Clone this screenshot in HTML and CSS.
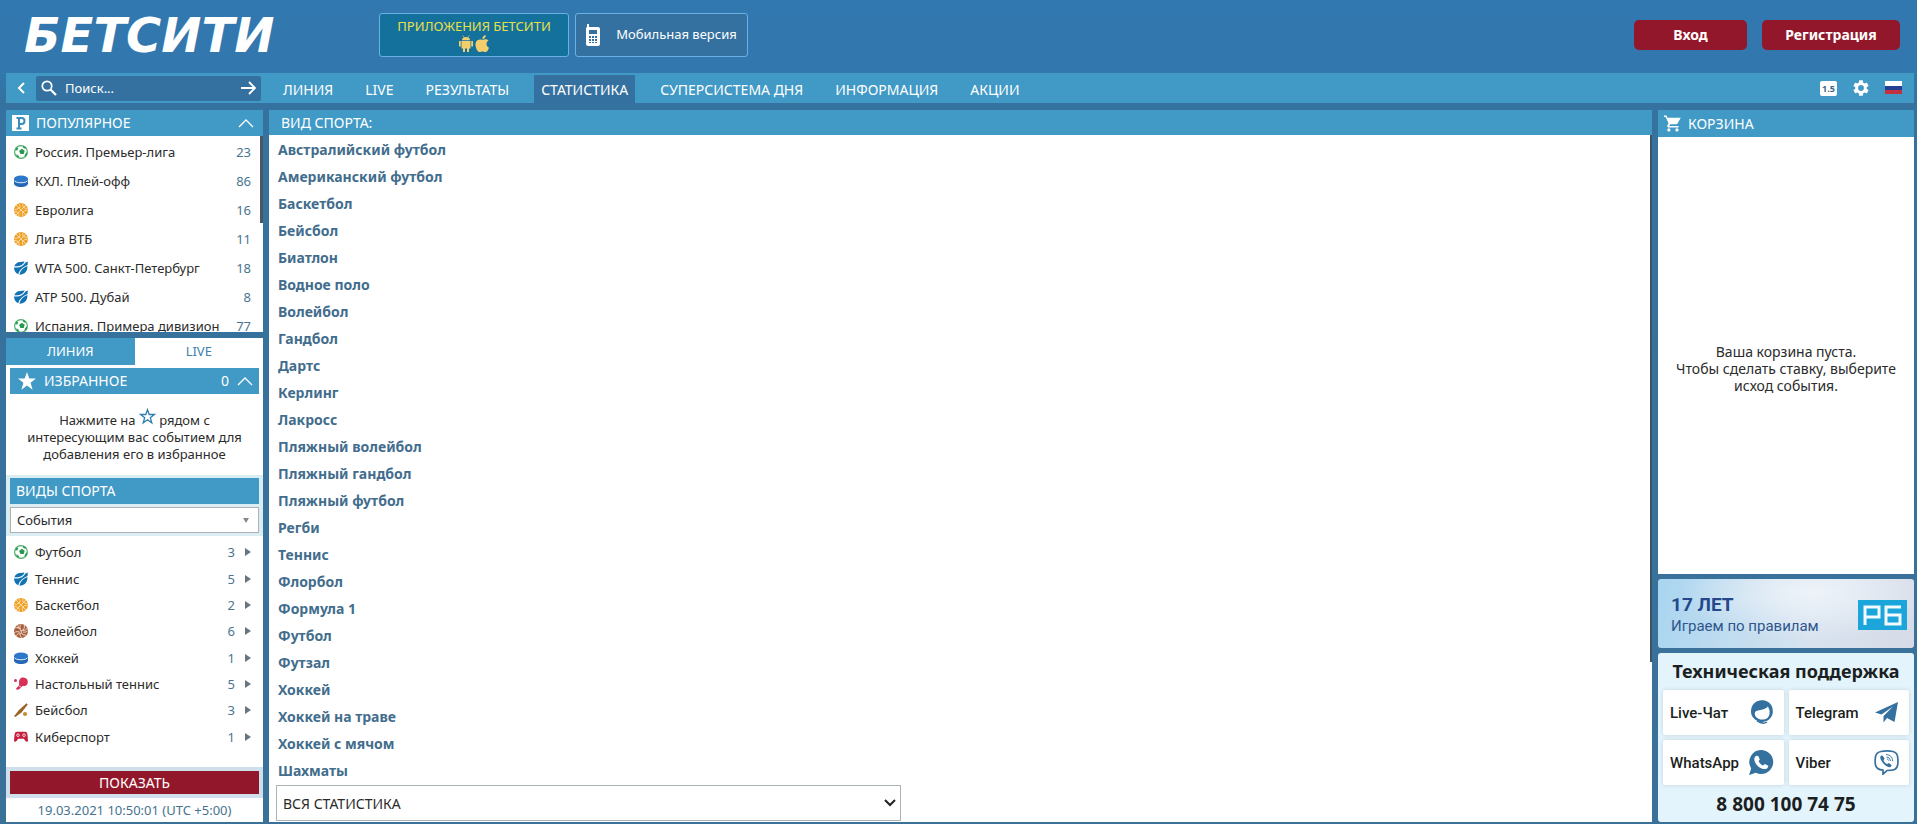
FILE: index.html
```html
<!DOCTYPE html>
<html lang="ru">
<head>
<meta charset="utf-8">
<meta name="viewport" content="width=device-width, initial-scale=1">
<title>БЕТСИТИ</title>
<link rel="stylesheet" href="styles.css">
</head>
<body>
<svg class="defs" aria-hidden="true">
  <symbol id="football" viewBox="0 0 14 14"><circle cx="7" cy="7" r="6.400" fill="#fff" stroke="#4cb06e" stroke-width="1.200"/><path d="M7.800 3.800l2.900 1.900-.9 3.400H6.400L5.100 6z" fill="#259a4e"/><path d="M1 5.200l1.700-2.600 1.600.6L3.200 5.600zM9 .8l3 1.700-.6 1.200-2.200-.8zM12 8l1.300-.8-.5 2.600-1.800 2-.5-1.400zM2 9.500l2 .6 1.600 2.600-2.300-.8z" fill="#259a4e"/></symbol>
  <symbol id="puck" viewBox="0 0 14 14"><path d="M0 5v4.500C0 11.400 3 13 7 13s7-1.600 7-3.500V5z" fill="#2367b5"/><ellipse cx="7" cy="4.800" rx="7" ry="3.300" fill="#2c78cb"/><path d="M0 6.300c1.500 3.300 12.500 3.300 14 0" fill="none" stroke="#fff" stroke-width=".9"/></symbol>
  <symbol id="basketball" viewBox="0 0 14 14"><circle cx="7" cy="7" r="7" fill="#efa126"/><path d="M2 2l10 10M12 2L2 12M4.800.600c2.200 2.600 2 5-4 6M13.500 7.200c-4.500.200-6 2.500-4.500 6.200M.500 8.500c4 .200 5 2 4.500 5M9 .500C8 4 10 5.500 13.500 5.300" fill="none" stroke="#fff" stroke-width=".6"/></symbol>
  <symbol id="tennis" viewBox="0 0 14 14"><path d="M.300 5.200C1.200 2.500 3.500.900 6 .900l4.500-.4C9.500 3.600 5.500 6 .300 5.200z" fill="#1273b4"/><path d="M0 6.400c5 1 9.600-1.600 11.400-5l2.400-.9-.2 3.400C9.500 5.500 5.500 8.500 4.300 13.200 1.800 12.200 0 9.500 0 6.400z" fill="#1273b4"/><path d="M13.400 5.100c.3 5-2.600 8.700-8 8.700.7-4 3.500-7 8-8.700z" fill="#1273b4"/></symbol>
  <symbol id="volleyball" viewBox="0 0 14 14"><circle cx="7" cy="7" r="7" fill="#a85d38"/><path d="M7 7C6 4 3.500 3 1 4M7 7c3-1 4-3.500 3.200-6M7 7c0 3 2 4.500 5 4M7 .500C5.600 2 5.700 3.500 6.300 5M4 1.300C4 3 4.500 4 5 4.500M8.800 8c2 .500 3.500 0 4.700-1M9 6.300c2 .400 3.600-.6 4-2M5.700 8.200C3.500 7.500 2 7.500.500 8.500M5.500 9.500c-1.400 0-2.500 1-3 2.200M6.300 9c-.6 1.700 0 3.300 1.200 4.700" fill="none" stroke="#fff" stroke-width=".8"/></symbol>
  <symbol id="pingpong" viewBox="0 0 14 14"><circle cx="1.500" cy="3.500" r="1.500" fill="#d7315a"/><path d="M6 2c2-2.500 6.500-1.500 7.500 1.300 1 2.700-.5 5.500-2.500 5.700-1.500.200-2.500-.5-3.500 1L5.500 12 3 13l-1-1.500L4.500 9C6 7.500 4 4.500 6 2z" fill="#d7315a"/><path d="M4.800 8.700l2.600 1.700" stroke="#fff" stroke-width=".7"/></symbol>
  <symbol id="baseball" viewBox="0 0 14 14"><path d="M12.500.300l1.300 1.200-6.300 8L2 13.500l-1 .5-.8-.8.600-1L5 7z" fill="#9a6224"/><circle cx="11" cy="11" r="2.100" fill="#c68a33"/></symbol>
  <symbol id="gamepad" viewBox="0 0 14 14"><path d="M3 1.800h8c1.500 0 2 .8 2.400 2.500l.6 6c0 1.800-1.800 2-2.500.8L9.800 8.800H4.200l-1.700 2.300C1.800 12.300 0 12.100 0 10.300l.6-6C1 2.600 1.500 1.800 3 1.800z" fill="#c4213f"/><circle cx="4" cy="5.200" r="1.300" fill="none" stroke="#fff" stroke-width=".8"/><circle cx="10" cy="5.200" r="1.300" fill="none" stroke="#fff" stroke-width=".8"/></symbol>
  <symbol id="chevron-up" viewBox="0 0 16 10"><path d="M1 9l7-7 7 7" fill="none" stroke="currentColor" stroke-width="1.300"/></symbol>
</svg>

<header class="top">
  <a class="logo" href="#">БЕТСИТИ</a>
  <div class="top-links">
    <a class="apps" href="#"><span>ПРИЛОЖЕНИЯ БЕТСИТИ</span>
      <svg width="32" height="18" viewBox="0 0 32 18" aria-hidden="true"><g fill="#f2cf6c"><path d="M3.500 6h9v7.500h-9zM4 5.200C4 3 5.800 2 8 2s4 1 4 3.200zM1 6h1.800v5.500H1zM13.200 6H15v5.500h-1.800zM5 13h2v4H5zM9 13h2v4H9z"/><path d="M4.800.500l1.500 2M11.200.500l-1.500 2" stroke="#f2cf6c" stroke-width=".7"/><path d="M28.500 9c0-1.800 1-2.800 2-3.400C29 3.800 26.500 4 24.500 5c-2.500-1-5-.5-6.500 2-1.500 3 .5 8 2.500 9.700 1.500 1 2.500-.2 4-.2s2.500 1.200 4 .2c1.200-1 2-2.500 2.500-4C29.500 12 28.500 10.800 28.500 9zM24.300 4.200C24.200 2 26 .2 27.800 0c.2 2-1.300 4.200-3.500 4.200z"/></g></svg>
    </a>
    <a class="mobile" href="#">
      <svg width="14" height="22" viewBox="0 0 14 22" aria-hidden="true"><path d="M1 0h2v3h9a2 2 0 012 2v15a2 2 0 01-2 2H2a2 2 0 01-2-2V4l1-1z" fill="#fff"/><path d="M3 6h8v4H3zM3 12h2v2H3zM6 12h2v2H6zM9 12h2v2H9zM3 15h2v2H3zM6 15h2v2H6zM9 15h2v2H9zM3 18h2v1H3zM6 18h2v1H6zM9 18h2v1H9z" fill="#35709e"/></svg>
      <span>Мобильная версия</span>
    </a>
  </div>
  <div class="auth">
    <button class="btn login" type="button">Вход</button>
    <button class="btn register" type="button">Регистрация</button>
  </div>
</header>

<div class="navbar">
  <button class="icon-btn back" type="button" aria-label="Назад"><svg width="8" height="12" viewBox="0 0 8 12"><path d="M7 1L2 6l5 5" fill="none" stroke="#fff" stroke-width="2"/></svg></button>
  <form class="search">
    <svg width="16" height="16" viewBox="0 0 16 16" aria-hidden="true"><circle cx="6" cy="6" r="4.700" fill="none" stroke="#fff" stroke-width="1.700"/><path d="M9.500 9.500l5.500 5.500" stroke="#fff" stroke-width="2.200"/></svg>
    <input type="text" aria-label="Поиск" placeholder="Поиск...">
    <button class="icon-btn" type="button" aria-label="Найти"><svg width="16" height="14" viewBox="0 0 16 14"><path d="M0 7h14M8 1l6 6-6 6" fill="none" stroke="#fff" stroke-width="1.800"/></svg></button>
  </form>
  <nav class="menu">
    <a href="#">ЛИНИЯ</a><a href="#">LIVE</a><a href="#">РЕЗУЛЬТАТЫ</a><a class="active" href="#">СТАТИСТИКА</a><a href="#">СУПЕРСИСТЕМА ДНЯ</a><a href="#">ИНФОРМАЦИЯ</a><a href="#">АКЦИИ</a>
  </nav>
  <div class="tools">
    <button class="odds" type="button" aria-label="Формат коэффициентов 1.5">1.5</button>
    <button class="icon-btn" type="button" aria-label="Настройки"><svg width="16" height="16" viewBox="2 2 20 20"><path fill="#fff" d="M19.140 12.940a7 7 0 000-1.880l2.030-1.580a.5.5 0 00.120-.610l-1.920-3.320a.5.5 0 00-.590-.220l-2.390.960a7 7 0 00-1.620-.940l-.360-2.540A.5.500 0 0013.920 2.400h-3.840a.5.500 0 00-.480.410l-.360 2.540a7 7 0 00-1.620.940l-2.390-.960a.5.500 0 00-.590.220L2.720 8.870a.5.500 0 00.120.610l2.030 1.580a7 7 0 000 1.880l-2.030 1.580a.5.500 0 00-.120.610l1.920 3.320c.120.220.370.290.590.220l2.390-.960c.5.380 1.030.700 1.620.940l.360 2.540c.050.240.240.410.480.410h3.840c.240 0 .440-.170.470-.410l.360-2.540a7 7 0 001.620-.940l2.390.960c.220.080.470 0 .590-.220l1.920-3.320a.5.500 0 00-.120-.610zM12 15.600a3.600 3.600 0 110-7.200 3.600 3.600 0 010 7.200z"/></svg></button>
    <button class="icon-btn" type="button" aria-label="Русский"><svg width="17" height="14" viewBox="0 0 17 14"><path fill="#fff" d="M0 0h17v5H0z"/><path fill="#263f92" d="M0 5h17v4H0z"/><path fill="#c5303f" d="M0 9h17v4H0z"/></svg></button>
  </div>
</div>

<div class="columns">
  <aside class="left">
    <section class="popular">
      <h2 class="bar"><svg width="17" height="16" viewBox="0 0 17 16" aria-hidden="true"><path fill="#fff" d="M0 0h17v16H0z"/><path d="M7 14V3h2.500a3 3 0 010 6H7M4.500 3H7M4.500 13.500h5" fill="none" stroke="#3b8dba" stroke-width="2"/></svg><span>ПОПУЛЯРНОЕ</span><svg class="end" width="16" height="10"><use href="#chevron-up"/></svg></h2>
      <ul class="rows popular-rows">
        <li><svg><use href="#football"/></svg><a href="#">Россия. Премьер-лига</a><b>23</b></li>
        <li><svg><use href="#puck"/></svg><a href="#">КХЛ. Плей-офф</a><b>86</b></li>
        <li><svg><use href="#basketball"/></svg><a href="#">Евролига</a><b>16</b></li>
        <li><svg><use href="#basketball"/></svg><a href="#">Лига ВТБ</a><b>11</b></li>
        <li><svg><use href="#tennis"/></svg><a href="#">WTA 500. Санкт-Петербург</a><b>18</b></li>
        <li><svg><use href="#tennis"/></svg><a href="#">ATP 500. Дубай</a><b>8</b></li>
        <li><svg><use href="#football"/></svg><a href="#">Испания. Примера дивизион</a><b>77</b></li>
      </ul>
    </section>
    <section class="line">
      <div class="tabs"><button class="on" type="button">ЛИНИЯ</button><button type="button">LIVE</button></div>
      <h2 class="bar inset favs"><svg width="18" height="18" viewBox="0 0 18 18" aria-hidden="true"><path fill="#fff" d="M9 0l2.300 6.600H18l-5.400 4.200 2 7L9 13.600l-5.600 4.200 2-7L0 6.600h6.700z"/></svg><span>ИЗБРАННОЕ</span><span class="end">0</span><svg width="16" height="10"><use href="#chevron-up"/></svg></h2>
      <p class="hint">Нажмите на <svg width="17" height="17" viewBox="0 0 17 17"><path d="M8.500 1.700l1.700 4.800h5.100l-4 3.200 1.500 5.200-4.300-3.100-4.300 3.100 1.500-5.200-4-3.200h5.100z" fill="#fff" stroke="#2f7fae" stroke-width="1.300"/></svg> рядом с интересующим вас событием для добавления его в избранное</p>
      <div class="filter">
        <h2 class="bar kinds">ВИДЫ СПОРТА</h2>
        <div class="select small"><select aria-label="Сортировка"><option>События</option></select><svg width="6" height="5" viewBox="0 0 6 5"><path d="M0 0h6L3 5z" fill="#888"/></svg></div>
      </div>
      <ul class="rows sport-rows">
        <li><svg><use href="#football"/></svg><a href="#">Футбол</a><b>3</b><i></i></li>
        <li><svg><use href="#tennis"/></svg><a href="#">Теннис</a><b>5</b><i></i></li>
        <li><svg><use href="#basketball"/></svg><a href="#">Баскетбол</a><b>2</b><i></i></li>
        <li><svg><use href="#volleyball"/></svg><a href="#">Волейбол</a><b>6</b><i></i></li>
        <li><svg><use href="#puck"/></svg><a href="#">Хоккей</a><b>1</b><i></i></li>
        <li><svg><use href="#pingpong"/></svg><a href="#">Настольный теннис</a><b>5</b><i></i></li>
        <li><svg><use href="#baseball"/></svg><a href="#">Бейсбол</a><b>3</b><i></i></li>
        <li><svg><use href="#gamepad"/></svg><a href="#">Киберспорт</a><b>1</b><i></i></li>
      </ul>
      <div class="show"><button type="button">ПОКАЗАТЬ</button></div>
      <time class="clock" datetime="2021-03-19T10:50:01+05:00">19.03.2021 10:50:01 (UTC +5:00)</time>
    </section>
  </aside>

  <main class="stats">
    <h1 class="bar">ВИД СПОРТА:</h1>
    <ul class="sports">
      <li><a href="#">Австралийский футбол</a></li>
      <li><a href="#">Американский футбол</a></li>
      <li><a href="#">Баскетбол</a></li>
      <li><a href="#">Бейсбол</a></li>
      <li><a href="#">Биатлон</a></li>
      <li><a href="#">Водное поло</a></li>
      <li><a href="#">Волейбол</a></li>
      <li><a href="#">Гандбол</a></li>
      <li><a href="#">Дартс</a></li>
      <li><a href="#">Керлинг</a></li>
      <li><a href="#">Лакросс</a></li>
      <li><a href="#">Пляжный волейбол</a></li>
      <li><a href="#">Пляжный гандбол</a></li>
      <li><a href="#">Пляжный футбол</a></li>
      <li><a href="#">Регби</a></li>
      <li><a href="#">Теннис</a></li>
      <li><a href="#">Флорбол</a></li>
      <li><a href="#">Формула 1</a></li>
      <li><a href="#">Футбол</a></li>
      <li><a href="#">Футзал</a></li>
      <li><a href="#">Хоккей</a></li>
      <li><a href="#">Хоккей на траве</a></li>
      <li><a href="#">Хоккей с мячом</a></li>
      <li><a href="#">Шахматы</a></li>
    </ul>
    <div class="select large"><select aria-label="Статистика"><option>ВСЯ СТАТИСТИКА</option></select><svg width="12" height="8" viewBox="0 0 12 8"><path d="M1 1l5 5 5-5" fill="none" stroke="#222" stroke-width="2"/></svg></div>
  </main>

  <aside class="right">
    <section class="basket">
      <h2 class="bar"><svg width="17" height="17" viewBox="1 2 21 20" aria-hidden="true"><path fill="#fff" d="M7 18a2 2 0 100 4 2 2 0 000-4zM1 2v2h2l3.600 7.590-1.350 2.450C4.520 15.370 5.480 17 7 17h12v-2H7.420l1.130-2h7.450c.75 0 1.410-.41 1.750-1.030L21.700 5H5.210L4.270 2zM17 18a2 2 0 100 4 2 2 0 000-4z"/></svg><span>КОРЗИНА</span></h2>
      <p>Ваша корзина пуста.<br>Чтобы сделать ставку, выберите исход события.</p>
    </section>
    <a class="banner" href="#">
      <span class="banner-text"><strong>17 ЛЕТ</strong><span>Играем по правилам</span></span>
      <svg width="49" height="30" viewBox="0 0 49 30" role="img" aria-label="РБ"><path fill="#1ba5da" d="M0 0h49v30H0z"/><path d="M7 25V7h14v10H7M43 7H28v17h14v-9H28" fill="none" stroke="#f3fbff" stroke-width="3"/></svg>
    </a>
    <section class="support">
      <h2>Техническая поддержка</h2>
      <div class="cards">
        <a href="#"><span>Live-Чат</span><svg width="24" height="25" viewBox="0 0 24 25"><path d="M10 .500c5-1 10 1.500 12 6 1.500 5 1 9-2 12-1 1-2 2-3.500 2.500l-3 .7c-.8 1.300-3.500 1.300-4 0C5 20 1 17 1 11.500 1 6 4 1.500 10 .500zM18 6.500c-2 2.500-6 3.500-11 4.200-2 .5-3 3-1.500 5.500 2 3 6 4 9.500 3 4-1 5-5 4.500-9z" fill="#35719f" fill-rule="evenodd"/><path d="M7 21c3 2 7 3 10 1" fill="none" stroke="#35719f" stroke-width="1.500"/></svg></a>
        <a href="#"><span>Telegram</span><svg width="24" height="21" viewBox="0 0 24 21"><path d="M0 10.500L23 0l-3.500 20-7.500-4-3.500 4.500V14L18 4.500 6.500 12.500z" fill="#35719f"/></svg></a>
        <a href="#"><span>WhatsApp</span><svg width="25" height="25" viewBox="0 0 25 25"><path d="M12.700 0a12 12 0 11-5.900 22.700L0 25l2.200-6.600A12 12 0 0112.700 0z" fill="#35719f"/><path d="M7.500 5.800L9.300 6l1.500 3.600-1.200 1.700c1 2 2.400 3.400 4.500 4.200l1.700-1.500 3.500 1.700c0 2-1.600 3.400-3.500 3.400-5.500 0-10.500-5.600-10.500-10 0-1.400.8-2.800 2.200-3.300z" fill="#fff"/></svg></a>
        <a href="#"><span>Viber</span><svg width="25" height="25" viewBox="0 0 25 25"><path d="M7 1.500c4-.7 8-.7 12 0 3 .8 4.500 3 4.700 6 .4 3 .3 6-.2 8-.7 3-2.800 4.400-5.500 4.700l-5 .3L9 24.200v-4C5 19.700 2 18 1.500 15c-.5-3-.4-6 0-8.500C2.200 3.500 4 2 7 1.500z" fill="none" stroke="#35719f" stroke-width="1.700"/><path d="M7.500 5.500l1.300.2 1.700 3-1 1.600c.8 2 1.900 3 3.700 3.800l1.500-1 2.800 2c0 1.700-1 2.400-2.300 2.200-4.500-1.500-8-5.500-9-9.500 0-1 .3-1.900 1.300-2.300z" fill="#35719f"/><path d="M12 4.500c4 .2 6.500 2.500 6.700 6.700M12.500 7c2.300.2 3.700 1.500 3.900 4M13 9c.8.100 1.300.5 1.500 1.500" fill="none" stroke="#35719f"/></svg></a>
      </div>
      <a class="phone" href="tel:88001007475">8 800 100 74 75</a>
    </section>
  </aside>
</div>
</body>
</html>
```
FILE: styles.css
```css
* { box-sizing: border-box; }
body {
  margin: 0;
  min-height: 100vh;
  display: flex;
  flex-direction: column;
  padding: 0 3px 2px 6px;
  background: linear-gradient(#3278b0 0, #3278ae 72px, #35729f 104px, #3a7199 100%);
  color: #2b2b2b;
  font: 14px/17px "Noto Sans", "Open Sans", sans-serif;
}
ul, h1, h2, p { margin: 0; padding: 0; font-weight: 400; list-style: none; }
a { color: inherit; text-decoration: none; }
button, input, select { font: inherit; color: inherit; border: 0; padding: 0; margin: 0; }
button { cursor: pointer; }
svg { flex: none; display: block; }
.defs { position: absolute; width: 0; height: 0; }

/* Header */
.top { display: flex; height: 73px; align-items: center; padding: 0 14px 4px 18px; }
.logo { width: 355px; color: #fff; font: italic 700 48px/50px "DejaVu Sans", sans-serif; }
.top-links { display: flex; gap: 6px; }
.apps, .mobile { height: 44px; border: 1px solid #69b3e4; border-radius: 3px; color: #fff; font-size: 13px; }
.apps { width: 190px; display: flex; flex-direction: column; align-items: center; padding-top: 4px; background: #14719c; color: #e8e04a; }
.apps span { white-space: nowrap; }
.mobile { width: 173px; display: flex; align-items: center; justify-content: center; gap: 16px; background: #3571a0; }
.auth { display: flex; gap: 15px; margin-left: auto; }
.btn { height: 30px; border-radius: 5px; background: #93172b; color: #fff; font-weight: 700; }
.login { width: 113px; }
.register { width: 138px; }

/* Navigation */
.navbar { display: flex; height: 30px; align-items: center; background: #4199c6; color: #fff; }
.icon-btn { display: flex; background: none; }
.back { width: 30px; justify-content: center; }
.search { display: flex; align-items: center; gap: 8px; width: 225px; height: 25px; padding: 0 4px 0 5px; background: #3571a0; border-radius: 2px; }
.search input { flex: 1; min-width: 0; background: none; font-size: 13px; }
.search input::placeholder { color: #fff; opacity: 1; }
.menu { display: flex; align-self: flex-end; gap: 18px; margin-left: 15px; }
.menu a { height: 28px; padding: 0 7px; line-height: 29px; white-space: nowrap; }
.menu .active { background: #3571a0; }
.tools { display: flex; align-items: center; gap: 16px; margin-left: auto; padding-right: 12px; }
.odds { width: 17px; height: 15px; border-radius: 2px; background: #fff; color: #3b6785; font: 700 9px/15px "Noto Sans", sans-serif; }

/* Panels */
.columns { flex: 1; display: grid; grid-template-columns: 257px minmax(0, 1fr) 256px; gap: 6px; padding-top: 7px; }
.bar { display: flex; align-items: center; gap: 7px; height: 26px; padding: 0 6px; background: #4199c6; color: #fff; font-size: 14px; line-height: 20px; }
.bar .end { margin-left: auto; }
.left { display: flex; flex-direction: column; gap: 6px; }
.popular { position: relative; background: #fff; }
.popular::after { content: ""; position: absolute; top: 26px; right: 0; width: 3px; height: 87px; background: #4b5862; }
.popular .end { margin-right: 3px; }
.popular-rows { max-height: 196px; overflow: hidden; padding-top: 1px; }
.rows li { display: flex; align-items: center; padding: 0 12px 0 8px; font-size: 13px; line-height: 20px; }
.popular-rows li { height: 29px; }
.rows svg { width: 14px; height: 14px; margin-right: 7px; }
.rows a { white-space: nowrap; }
.rows b { margin-left: auto; color: #4a7590; font-weight: 400; }
.rows i { margin-left: 10px; border: solid transparent; border-width: 4px 0 4px 6px; border-left-color: #67757f; }
.line { flex: 1; display: flex; flex-direction: column; background: #fff; }
.tabs { display: grid; grid-template-columns: 1fr 1fr; height: 27px; }
.tabs button { background: #fff; color: #3d83ad; font-size: 13px; }
.tabs .on { background: #4199c6; color: #fff; }
.inset { margin: 3px 4px 0; }
.favs { padding-left: 8px; gap: 8px; }
.hint { padding: 14px 10px 12px; text-align: center; font-size: 13px; line-height: 17px; }
.hint svg { display: inline-block; vertical-align: 0; }
.filter { padding: 3px 4px; background: #d9edf3; }
.kinds { margin-bottom: 3px; }
.select { display: grid; align-items: center; }
.select > * { grid-area: 1 / 1; }
.select svg { justify-self: end; pointer-events: none; }
.select select { appearance: none; width: 100%; border: 1px solid #aab3b6; border-radius: 0; background: #fff; }
.small select { height: 26px; padding: 0 6px; font-size: 13px; }
.small svg { margin-right: 10px; }
.sport-rows { flex: 1; display: flex; flex-direction: column; padding: 3px 0 17px; }
.sport-rows li { flex: 1; min-height: 24px; }
.show { padding: 4px; background: #cfdfec; }
.show button { width: 100%; height: 23px; background: #93172b; color: #fff; display: block; }
.clock { display: block; text-align: center; color: #45738f; font-size: 13px; line-height: 24px; }

.stats { position: relative; background: #fff; }
.stats::after { content: ""; position: absolute; top: 25px; right: 0; width: 2px; height: 527px; background: #3d5466; }
.stats .bar { height: 25px; padding-left: 12px; }
.sports li { height: 27px; padding-left: 9px; color: #426d8d; font-size: 14px; font-weight: 700; line-height: 29px; }
.large { width: 46%; min-width: 300px; max-width: 625px; margin: 2px 7px 0; }
.large select { height: 36px; padding: 0 6px; }
.large svg { margin-right: 5px; }

.right { display: flex; flex-direction: column; gap: 5px; }
.basket { flex: 1; display: flex; flex-direction: column; background: #fff; }
.basket .bar { height: 27px; }
.basket p { margin: auto; padding: 25px 8px 0; text-align: center; }
.banner { display: flex; align-items: center; justify-content: space-between; height: 69px; padding: 2px 7px 0 13px; border-radius: 3px; background: radial-gradient(ellipse at 60% 20%, #eef3f9, transparent 60%), linear-gradient(100deg, #a9d5f0, #d7e3ef 60%, #d6dbe7); color: #2e568d; font-family: Roboto, sans-serif; }
.banner-text { display: flex; flex-direction: column; font-size: 15px; line-height: 20px; }
.banner-text strong { font-size: 19px; line-height: 22px; color: #24488b; }
.support { padding: 6px 5px; border-radius: 3px; background: #e4f4fc; color: #1b1f21; text-align: center; }
.support h2 { font-size: 18px; font-weight: 700; line-height: 24px; }
.cards { display: grid; grid-template-columns: 1fr 1fr; gap: 5px; margin: 7px 0; }
.cards a { display: flex; align-items: center; justify-content: space-between; height: 45px; padding: 0 10px 0 7px; background: #fff; border-radius: 2px; box-shadow: 0 0 4px #c2d3dc; font: 500 15px/20px Roboto, sans-serif; }
.phone { display: block; font-size: 19px; font-weight: 700; line-height: 24px; }
```
